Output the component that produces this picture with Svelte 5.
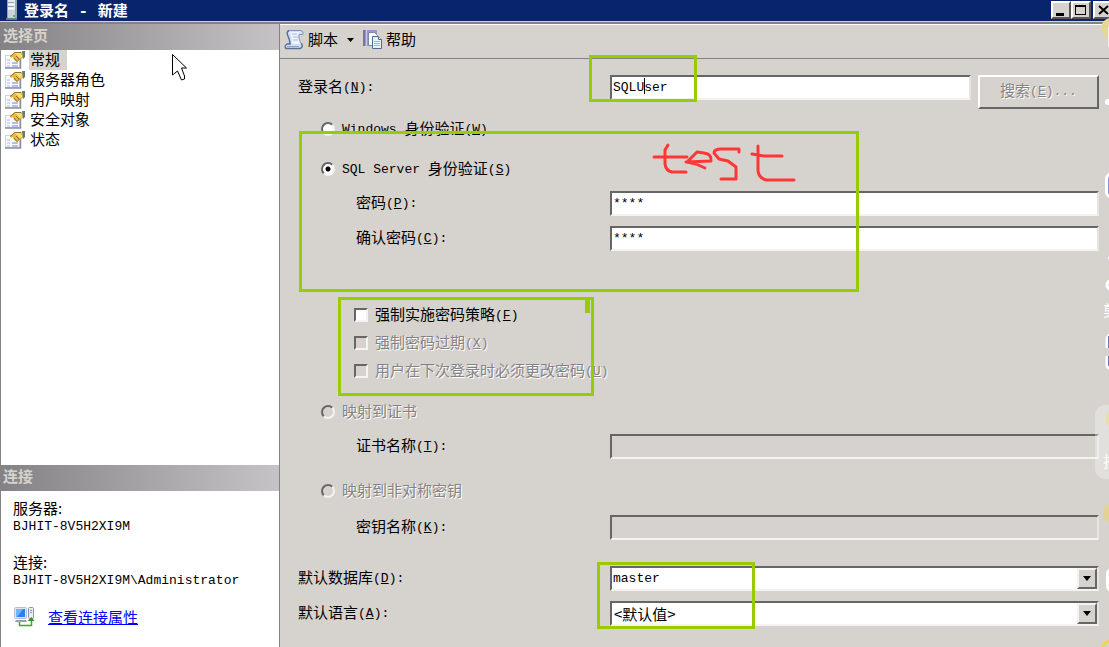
<script lang="ts">
  const pages = ['常规', '服务器角色', '用户映射', '安全对象', '状态'];

  let selected = $state('常规');
  let auth = $state('sql');
  let login = $state('SQLUser');
  let password = $state('****');
  let confirmed = $state('****');
</script>

{#snippet key(letter: string, tail: string)}
  <span class="latin">(<u>{letter}</u>){tail}</span>
{/snippet}

<div class="window">
  <header class="titlebar">
    <svg class="server" width="14" height="21" viewBox="0 0 14 21">
      <path d="M2 0h10v19H2z" fill="#e4eaf0" />
      <path d="M2 0h1v19H2z" fill="#8f9fb5" />
      <path d="M10 0h2v19h-2z" fill="#93a5bd" />
      <path d="M3 2.500h6M3 6.500h6" stroke="#8fa0b8" />
      <path d="M3 4.500h6M3 8.500h6" stroke="#fff" />
      <path d="M3 10h7v8H3z" fill="#c9d3df" />
      <path d="M1 19h11" stroke="#6a7688" stroke-width="2" />
      <rect x="8" y="15" width="2" height="2" fill="#5cc04c" />
    </svg>
    <h1>登录名<span class="dash">{' - '}</span>新建</h1>
    <div class="window-buttons">
      <button aria-label="最小化">
        <svg width="16" height="14"><path d="M3 11.500h8" stroke="#000" stroke-width="3" /></svg>
      </button>
      <button aria-label="最大化">
        <svg width="16" height="14">
          <rect x="2.500" y="2.500" width="10" height="9" fill="none" stroke="#000" />
          <path d="M2 3h11" stroke="#000" stroke-width="2" />
        </svg>
      </button>
      <button class="close" aria-label="关闭">
        <svg width="16" height="14"><path d="M4 3l9 8M13 3l-9 8" stroke="#000" stroke-width="2" /></svg>
      </button>
    </div>
  </header>

  <div class="body">
    <aside>
      <h2>选择页</h2>
      <nav>
        {#each pages as page}
          <button class="page" class:selected={page === selected} onclick={() => (selected = page)}>
            <svg width="20" height="18" viewBox="0 0 20 18">
              <rect x="0.500" y="4.500" width="14" height="12" fill="#f8f9ff" stroke="#d0d3dc" />
              <path d="M0 17h15.500V8" fill="none" stroke="#8b909c" stroke-width="1.500" />
              <path d="M2 9h3M2 12h3M2 15h3" stroke="#b4b8e6" />
              <path d="M7 12h6M7 15h6" stroke="#a4a9e6" stroke-width="1.500" />
              <path d="M5 5l5-4h7l2 6-4 1-3 3-3-2-1-3-2 1z" fill="#e9b93a" />
              <path d="M9 2l6 0 3 3-3 2-3-3z" fill="#ffe06a" />
              <path d="M5 5.500l5-4h6M9 7l3 3.500 3-3M11 5l3 3" fill="none" stroke="#8c7238" />
              <path d="M17 0h3v6l-2 2z" fill="#5f7f74" />
            </svg>
            <span>{page}</span>
          </button>
        {/each}
      </nav>
      <h2>连接</h2>
      <section class="connection">
        <p>服务器:<br /><span class="latin">BJHIT-8V5H2XI9M</span></p>
        <p>连接:<br /><span class="latin">BJHIT-8V5H2XI9M\Administrator</span></p>
        <div class="properties">
          <svg width="21" height="20" viewBox="0 0 21 20">
            <rect x="0.500" y="0.500" width="12" height="11" rx="1" fill="#dfe3f0" stroke="#b9bfd4" />
            <rect x="2" y="2" width="9" height="8" fill="#2f7ff0" />
            <path d="M2 2h7L3 10H2z" fill="#6db6ff" />
            <path d="M2 13h10l1 2H1z" fill="#9a9fb8" />
            <rect x="14.500" y="0.500" width="5" height="11" rx="1" fill="#e9ecf2" stroke="#8d93a6" />
            <path d="M16 3.500h2M16 5.500h2" stroke="#8d93a6" />
            <path d="M5.500 15v3.500h12V12" fill="none" stroke="#43a52c" stroke-width="1.500" />
            <path d="M13.500 14l4-4 3 4z" fill="#2f9a1c" />
          </svg>
          <a href="#properties">查看连接属性</a>
        </div>
      </section>
    </aside>

    <main>
      <div class="toolbar">
        <button>
          <svg width="21" height="21" viewBox="0 0 21 21">
            <path d="M5 1h12q3 1 2 4h-4q-1 4 2 9l1 4q0 2-2 2H2q-3-2 0-5h4q0-4-2-8-3-4 1-6z" fill="#d3e0f7" />
            <path d="M6 3h9q-1 6 2 12H8Q8 8 6 3z" fill="#eef4ff" />
            <path d="M5 1.500h12q3 1 2 4h-4q-1 4 2 9" fill="none" stroke="#7f95bd" />
            <path d="M5 1.500Q2 3 4 7q2 4 2 8H3q-3 2-1 4.500h14q3-1 2-4l-1-1" fill="none" stroke="#5a7197" stroke-width="1.500" />
            <path d="M8 5h5M9 8h5M9 11h5" stroke="#a9bbe0" />
            <path d="M3 17.500h12" stroke="#8ba2cb" />
          </svg>
          <span>脚本</span>
          <svg class="drop" width="7" height="4"><path d="M0 0h7L3.500 4z" /></svg>
        </button>
        <button>
          <svg width="21" height="21" viewBox="0 0 21 21">
            <path d="M1 1h14v16H1z" fill="#9a97cf" />
            <path d="M1 1h2v16H1z" fill="#7773ac" />
            <path d="M4.500 1v16" stroke="#c9c7ec" />
            <path d="M6.500 3.500h6l3 3v10h-9z" fill="#fff" stroke="#7c84a8" />
            <path d="M10.500 7.500h6l3 3v9h-9z" fill="#e8f1ff" stroke="#4d6b93" />
            <path d="M16.500 7.500v3h3" fill="#fff" stroke="#4d6b93" />
            <path d="M12 12.500h6M12 14.500h6M12 16.500h6" stroke="#a2b7dc" />
          </svg>
          <span>帮助</span>
        </button>
      </div>

      <form onsubmit={(e) => e.preventDefault()}>
        <div class="row">
          <label for="login">登录名{@render key('N', ':')}</label>
          <div class="login">
            <input id="login" class="field" type="text" bind:value={login} />
            <span class="caret"></span>
            <button class="search" type="button" disabled>搜索{@render key('E', '...')}</button>
          </div>
        </div>

        <div class="group windows">
          <label class="choice">
            <input type="radio" name="auth" value="windows" bind:group={auth} />
            <span><span class="latin">{'Windows '}</span>身份验证{@render key('W', '')}</span>
          </label>
        </div>

        <div class="group sql">
          <label class="choice">
            <input type="radio" name="auth" value="sql" bind:group={auth} />
            <span><span class="latin">{'SQL Server '}</span>身份验证{@render key('S', '')}</span>
          </label>
          <div class="row nested">
            <label for="password">密码{@render key('P', ':')}</label>
            <input id="password" class="field" type="text" bind:value={password} />
          </div>
          <div class="row nested">
            <label for="confirm">确认密码{@render key('C', ':')}</label>
            <input id="confirm" class="field" type="text" bind:value={confirmed} />
          </div>
        </div>

        <div class="group policy">
          <label class="choice">
            <input type="checkbox" />
            <span>强制实施密码策略{@render key('F', '')}</span>
          </label>
          <label class="choice off">
            <input type="checkbox" disabled />
            <span>强制密码过期{@render key('X', '')}</span>
          </label>
          <label class="choice off">
            <input type="checkbox" disabled />
            <span>用户在下次登录时必须更改密码{@render key('U', '')}</span>
          </label>
        </div>

        <div class="group certificate">
          <label class="choice off">
            <input type="radio" name="auth" value="certificate" disabled />
            <span>映射到证书</span>
          </label>
          <div class="row nested">
            <label for="certificate">证书名称{@render key('T', ':')}</label>
            <input id="certificate" class="field" type="text" disabled />
          </div>
        </div>

        <div class="group asymmetric">
          <label class="choice off">
            <input type="radio" name="auth" value="key" disabled />
            <span>映射到非对称密钥</span>
          </label>
          <div class="row nested">
            <label for="keyname">密钥名称{@render key('K', ':')}</label>
            <input id="keyname" class="field" type="text" disabled />
          </div>
        </div>

        <div class="group defaults">
          <div class="row">
            <label for="database">默认数据库{@render key('D', ':')}</label>
            <div class="combo">
              <select id="database" class="field"><option>master</option></select>
              <span class="arrow"><svg width="8" height="5"><path d="M0 0h8L4 5z" /></svg></span>
            </div>
          </div>
          <div class="row">
            <label for="language">默认语言{@render key('A', ':')}</label>
            <div class="combo">
              <select id="language" class="field chinese"><option>&lt;默认值&gt;</option></select>
              <span class="arrow"><svg width="8" height="5"><path d="M0 0h8L4 5z" /></svg></span>
            </div>
          </div>
        </div>
      </form>
    </main>
  </div>

  <svg class="overlay" aria-hidden="true">
    <!-- floating toolbar at the right edge -->
    <circle cx="1111" cy="28" r="10" fill="#e7d797" />
    <path d="M1109 27v20" stroke="#eee" stroke-width="2" />
    <rect x="1105" y="99" width="12" height="6" rx="3" fill="#fff" />
    <rect x="1106.500" y="174" width="14" height="23" rx="5" fill="#8298dd" stroke="#fff" stroke-width="3" />
    <circle cx="1110" cy="258" r="2" fill="#fff" />
    <circle cx="1111" cy="285" r="4" fill="#b9c9f6" stroke="#fff" stroke-width="3" />
    <text x="1103" y="316">剪</text>
    <path d="M1107 348v-8q0-4 5-6M1107 356v9q0 3 5 4" fill="none" stroke="#fff" stroke-width="3" />
    <path d="M1109 336v12M1109 356v10" stroke="#6878b5" stroke-width="2" />
    <rect x="1095" y="405" width="30" height="74" rx="10" fill="#fff" fill-opacity="0.3" />
    <circle cx="1113" cy="419" r="8" fill="#eadfaa" />
    <text x="1103" y="467">找</text>
    <circle cx="1113" cy="513" r="10" fill="#e3d391" />
    <rect x="1107.500" y="570" width="14" height="20" rx="4" fill="#9aaef5" stroke="#fff" stroke-width="3" />
    <circle cx="1111" cy="650" r="9" fill="none" stroke="#f5d34d" stroke-width="3" />

    <g fill="none" stroke="#9c0" stroke-width="3">
      <rect x="590.500" y="56.500" width="105" height="44" />
      <rect x="300.500" y="132.500" width="557" height="158" />
      <rect x="339.500" y="298.500" width="253" height="96" />
      <rect x="598.500" y="563.500" width="155" height="64" />
      <path d="M587.500 300v13" stroke-width="5" />
    </g>

    <g fill="none" stroke="#ff3636" stroke-width="3" stroke-linecap="round" stroke-linejoin="round">
      <path d="M668 145l-3 5v14q1 7 7 8h14M654 157h33" />
      <path d="M686 162l25-1q1-7-7-8l-7-1-10 10 9 2 9 4" />
      <path d="M739 152v-3h-18q-7 0-7 4l5 6 9 2 8 6v12h-15" />
      <path d="M758 146v25q1 7 8 9h28M752 154l12 2h18" />
    </g>

    <path
      d="M172.500 54.500v20.500l5-4 4 9 3-1v-3l-3-8h5z"
      fill="#fff"
      stroke="#000"
    />
  </svg>
</div>

<style>
  :global(body) {
    margin: 0;
    background: #d6d3ce;
  }

  .window {
    position: relative;
    display: flex;
    flex-direction: column;
    min-height: 100vh;
    overflow: hidden;
    background: #d6d3ce;
    color: #000;
    font: 15px/20px 'Noto Sans CJK SC', sans-serif;
  }

  h1,
  h2,
  p {
    margin: 0;
  }

  button,
  input,
  select {
    margin: 0;
    padding: 0;
    border: 0;
    border-radius: 0;
    background: none;
    color: inherit;
    font: inherit;
    box-sizing: border-box;
  }

  svg {
    display: block;
    flex: none;
  }

  .latin {
    font: 13px/15px 'Liberation Mono', monospace;
    vertical-align: 1px;
    white-space: pre;
  }

  .titlebar {
    display: flex;
    height: 21px;
    padding-left: 5px;
    background: #08246b;
    color: #fff;
    border-bottom: 1px solid #d6d3ce;
  }

  h1 {
    flex: 1;
    padding-left: 5px;
    font-size: 15px;
    font-weight: 700;
    line-height: 20px;
  }

  .dash {
    font: bold 16px/20px 'Liberation Mono', monospace;
    white-space: pre;
  }

  .window-buttons {
    display: flex;
    padding-top: 1px;
    margin-right: -4px;
  }

  .window-buttons button {
    width: 20px;
    height: 18px;
    background: #d6d3ce;
    border: 2px solid;
    border-color: #fff #555 #555 #fff;
  }

  .window-buttons .close {
    margin-left: 2px;
  }

  .body {
    flex: 1;
    display: flex;
    border-top: 2px solid #848284;
  }

  aside {
    flex: none;
    width: 278px;
    display: flex;
    flex-direction: column;
    background: #fff;
    border: solid #848284;
    border-width: 0 1px;
    box-sizing: content-box;
  }

  h2 {
    height: 26px;
    padding-left: 2px;
    background: linear-gradient(90deg, #848284, #c6c3c6);
    color: #d6d3ce;
    font-size: 15px;
    font-weight: 700;
    line-height: 22px;
  }

  nav {
    flex: 1;
    padding: 0 4px;
  }

  .page {
    display: flex;
    align-items: center;
    gap: 4px;
    height: 20px;
  }

  .page span {
    height: 20px;
    padding: 0 1px;
    line-height: 18px;
  }

  .selected span {
    padding-right: 7px;
    background: #d6d3ce;
  }

  .connection {
    display: flex;
    flex-direction: column;
    gap: 20px;
    padding: 9px 12px 21px;
  }

  .connection p {
    line-height: 16px;
  }

  .connection .latin {
    vertical-align: baseline;
  }

  .properties {
    display: flex;
    align-items: center;
    gap: 13px;
    height: 18px;
    padding-left: 1px;
  }

  a {
    color: #00f;
    line-height: 18px;
  }

  main {
    flex: 1;
    min-width: 0;
    border-top: 1px solid #fff;
  }

  .toolbar {
    display: flex;
    gap: 8px;
    height: 34px;
    padding: 4px 4px 0;
    box-sizing: border-box;
    border-bottom: 1px solid #848284;
  }

  .toolbar button {
    display: flex;
    align-items: center;
    gap: 3px;
    height: 21px;
    line-height: 18px;
  }

  .toolbar span {
    height: 20px;
  }

  .toolbar .drop {
    margin-left: 6px;
  }

  form {
    padding: 16px 10px 20px 18px;
  }

  .row {
    display: grid;
    grid-template-columns: 312px 1fr;
    height: 25px;
  }

  .row label,
  .choice span {
    line-height: 22px;
  }

  .nested label {
    padding-left: 58px;
  }

  .group {
    display: flex;
    flex-direction: column;
    gap: 10px;
  }

  .windows {
    margin-top: 16px;
  }

  .sql {
    margin-top: 15px;
  }

  .policy {
    gap: 3px;
    margin-top: 51px;
    padding-left: 33px;
  }

  .certificate {
    margin-top: 16px;
  }

  .asymmetric {
    gap: 12px;
    margin-top: 19px;
  }

  .defaults {
    margin-top: 26px;
  }

  .field {
    width: 100%;
    height: 25px;
    padding: 0 1px;
    background: #fff;
    border: 2px solid;
    border-color: #666 #e7e5e2 #f4f3f1 #666;
    outline: 0;
    font: 13px/20px 'Liberation Mono', monospace;
  }

  .field:disabled {
    background: #d6d3ce;
  }

  .login {
    position: relative;
    display: grid;
    grid-template-columns: 1fr 121px;
    gap: 7px;
    align-items: start;
    height: 25px;
  }

  .caret {
    position: absolute;
    left: 34px;
    top: 3px;
    width: 1px;
    height: 16px;
    background: #000;
  }

  .search {
    height: 34px;
    padding-bottom: 4px;
    border: 2px solid;
    border-color: #fff #666 #666 #fff;
  }

  .search,
  .off {
    color: #848284;
    text-shadow: 1px 1px #fff;
  }

  .choice {
    display: flex;
    align-items: center;
    gap: 7px;
    height: 25px;
    padding-left: 23px;
  }

  .choice > span {
    height: 24px;
  }

  .choice input {
    appearance: none;
    flex: none;
    width: 14px;
    height: 14px;
    background: #fff;
    border: 2px solid;
    border-color: #666 #f4f3f1 #f4f3f1 #666;
  }

  .choice input[type='radio'] {
    border-radius: 50%;
  }

  .choice input[type='radio']:checked {
    background: radial-gradient(circle, #000 2px, #fff 3px);
  }

  .choice input:disabled {
    background: #d9d1cc;
  }

  .combo {
    position: relative;
  }

  .combo select {
    display: block;
    appearance: none;
  }

  .combo .chinese {
    padding-left: 2px;
    font: 15px/18px 'Noto Sans CJK SC', sans-serif;
  }

  .arrow {
    position: absolute;
    top: 2px;
    right: 2px;
    display: grid;
    place-items: center;
    width: 20px;
    height: 21px;
    box-sizing: border-box;
    background: #d6d3ce;
    border: 2px solid;
    border-color: #f4f3f1 #666 #666 #f4f3f1;
    pointer-events: none;
  }

  .overlay {
    position: absolute;
    inset: 0;
    width: 100%;
    height: 100%;
    pointer-events: none;
  }

  .overlay text {
    fill: #fff;
    font-size: 15px;
  }
</style>
